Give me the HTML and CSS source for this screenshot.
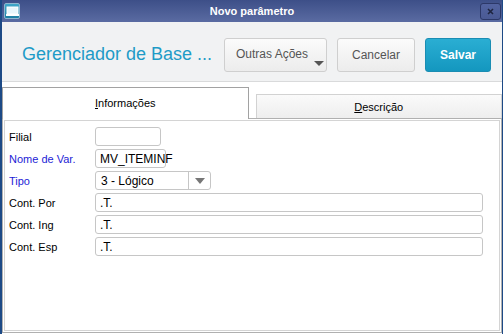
FILE: index.html
```html
<!DOCTYPE html>
<html lang="pt">
<head>
  <meta charset="UTF-8">
  <title>Novo parâmetro</title>
  <link rel="stylesheet" href="styles.css">
</head>
<body>

  <div class="window">
    <div class="titlebar">
      <span class="app-icon">
        <svg width="13" height="11" viewBox="0 0 13 11">
          <rect x="1" y="1" width="11" height="7" fill="#e8f6fb" stroke="#ffffff" stroke-width="1"/>
          <rect x="0" y="8" width="13" height="2" fill="#ffffff"/>
        </svg>
      </span>
      <span class="title">Novo parâmetro</span>
      <span class="close-btn">
        <svg width="7" height="7" viewBox="0 0 7 7">
          <path d="M1 1 L6 6 M6 1 L1 6" stroke="#1e2540" stroke-width="1.6"/>
        </svg>
      </span>
    </div>

    <div class="header">
      <h1 class="page-title">Gerenciador de Base ...</h1>
      <div class="actions">
        <button class="btn more-btn">Outras Ações<span class="caret"></span></button>
        <button class="btn cancel-btn">Cancelar</button>
        <button class="btn save-btn">Salvar</button>
      </div>
    </div>

    <div class="tabs">
      <div class="tab active"><u>I</u>nformações</div>
      <div class="tab"><u>D</u>escrição</div>
    </div>

    <div class="panel">
      <div class="row">
        <label>Filial</label>
        <div class="field filial"></div>
      </div>
      <div class="row">
        <label class="required">Nome de Var.</label>
        <div class="field var-name">MV_ITEMINF</div>
      </div>
      <div class="row">
        <label class="required">Tipo</label>
        <div class="field select">
          <span class="select-text">3 - Lógico</span>
          <span class="select-arrow"></span>
        </div>
      </div>
      <div class="row">
        <label>Cont. Por</label>
        <div class="field wide">.T.</div>
      </div>
      <div class="row">
        <label>Cont. Ing</label>
        <div class="field wide">.T.</div>
      </div>
      <div class="row">
        <label>Cont. Esp</label>
        <div class="field wide">.T.</div>
      </div>
    </div>
  </div>

</body>
</html>
```

FILE: styles.css
```css
body {
  margin: 0;
  font-family: "Liberation Sans", Arial, sans-serif;
  font-size: 11px;
  background: #ffffff;
}
.window {
  width: 503px;
  height: 334px;
  box-sizing: border-box;
  border-left: 2px solid #1d4a86;
  border-right: 1px solid #1d4a86;
  display: flex;
  flex-direction: column;
  background: #ffffff;
  overflow: hidden;
}
.titlebar {
  height: 22px;
  flex: none;
  display: flex;
  align-items: center;
  padding: 0 1px 0 2px;
  background: linear-gradient(#3d4f88, #5a6ba2);
  color: #ffffff;
}
.app-icon {
  width: 16px;
  height: 16px;
  box-sizing: border-box;
  border: 1px solid #8fb6cf;
  border-radius: 2px;
  background: linear-gradient(#3fa7c9, #1f7fa3);
  display: flex;
  align-items: center;
  justify-content: center;
}
.title {
  flex: 1;
  text-align: center;
  font-weight: bold;
  font-size: 11px;
  padding-left: 4px;
}
.close-btn {
  width: 21px;
  height: 17px;
  box-sizing: border-box;
  border: 1px solid #2c3868;
  border-radius: 3px;
  background: linear-gradient(#5263a0, #4a5a94);
  display: flex;
  align-items: center;
  justify-content: center;
}
.header {
  height: 60px;
  flex: none;
  box-sizing: border-box;
  display: flex;
  align-items: center;
  justify-content: space-between;
  padding: 2px 11px 0 20px;
  background: #f1f2f3;
  border-bottom: 1px solid #d9dadb;
}
.page-title {
  margin: 3px 0 0;
  font-weight: normal;
  font-size: 18px;
  color: #1e9bc7;
}
.actions {
  display: flex;
  gap: 10px;
  margin-top: 4px;
}
.btn {
  position: relative;
  height: 34px;
  padding: 0;
  font-family: "Liberation Sans", Arial, sans-serif;
  font-size: 12px;
  color: #555555;
  background: linear-gradient(#fbfbfb, #ececec);
  border: 1px solid #cfcfcf;
  border-radius: 3px;
}
.more-btn {
  width: 103px;
  padding: 0 0 2px 11px;
  text-align: left;
}
.caret {
  position: absolute;
  right: 2px;
  bottom: 5px;
  border-left: 5px solid transparent;
  border-right: 5px solid transparent;
  border-top: 5px solid #555555;
}
.cancel-btn {
  width: 78px;
}
.save-btn {
  width: 66px;
  color: #ffffff;
  font-weight: bold;
  background: linear-gradient(#2aaed3, #1497bf);
  border-color: #1a8db3;
}
.tabs {
  display: flex;
  gap: 7px;
  align-items: flex-end;
  margin-top: 5px;
  position: relative;
  z-index: 1;
}
.tab {
  flex: 1;
  box-sizing: border-box;
  height: 24px;
  display: flex;
  align-items: center;
  justify-content: center;
  border: 1px solid #d2d2d2;
  border-bottom: none;
  background: linear-gradient(#fafafa, #eeeeee);
  color: #000000;
}
.tab.active {
  height: 32px;
  border-color: #a2a2a2;
  background: #ffffff;
  padding-bottom: 2px;
  margin-bottom: -1px;
}
.panel {
  flex: 1;
  margin-bottom: 1px;
  border: 1px solid #b0b0b0;
  box-shadow: inset 0 0 0 1px #ffffff, inset 0 0 0 2px #d4d4d4;
  padding: 8px 18px 0 6px;
  display: flex;
  flex-direction: column;
  gap: 3px;
}
.row {
  display: flex;
  align-items: center;
  height: 19px;
}
.row label {
  width: 86px;
  flex: none;
  color: #000000;
}
.row label.required {
  color: #1d1dd6;
}
.field {
  height: 19px;
  box-sizing: border-box;
  border: 1px solid #c6c6c6;
  border-radius: 3px;
  padding: 0 4px;
  display: flex;
  align-items: center;
  background: #ffffff;
  color: #000000;
}
.filial {
  width: 66px;
}
.var-name {
  width: 71px;
  font-size: 12px;
}
.select {
  width: 116px;
  padding: 0;
  font-size: 12px;
}
.select-text {
  flex: 1;
  padding-left: 5px;
  height: 100%;
  display: flex;
  align-items: center;
  border-right: 1px solid #c6c6c6;
}
.select-arrow {
  width: 21px;
  display: flex;
  justify-content: center;
}
.select-arrow::after {
  content: "";
  border-left: 5px solid transparent;
  border-right: 5px solid transparent;
  border-top: 6px solid #777777;
}
.wide {
  flex: 1;
  font-size: 12px;
}
```
